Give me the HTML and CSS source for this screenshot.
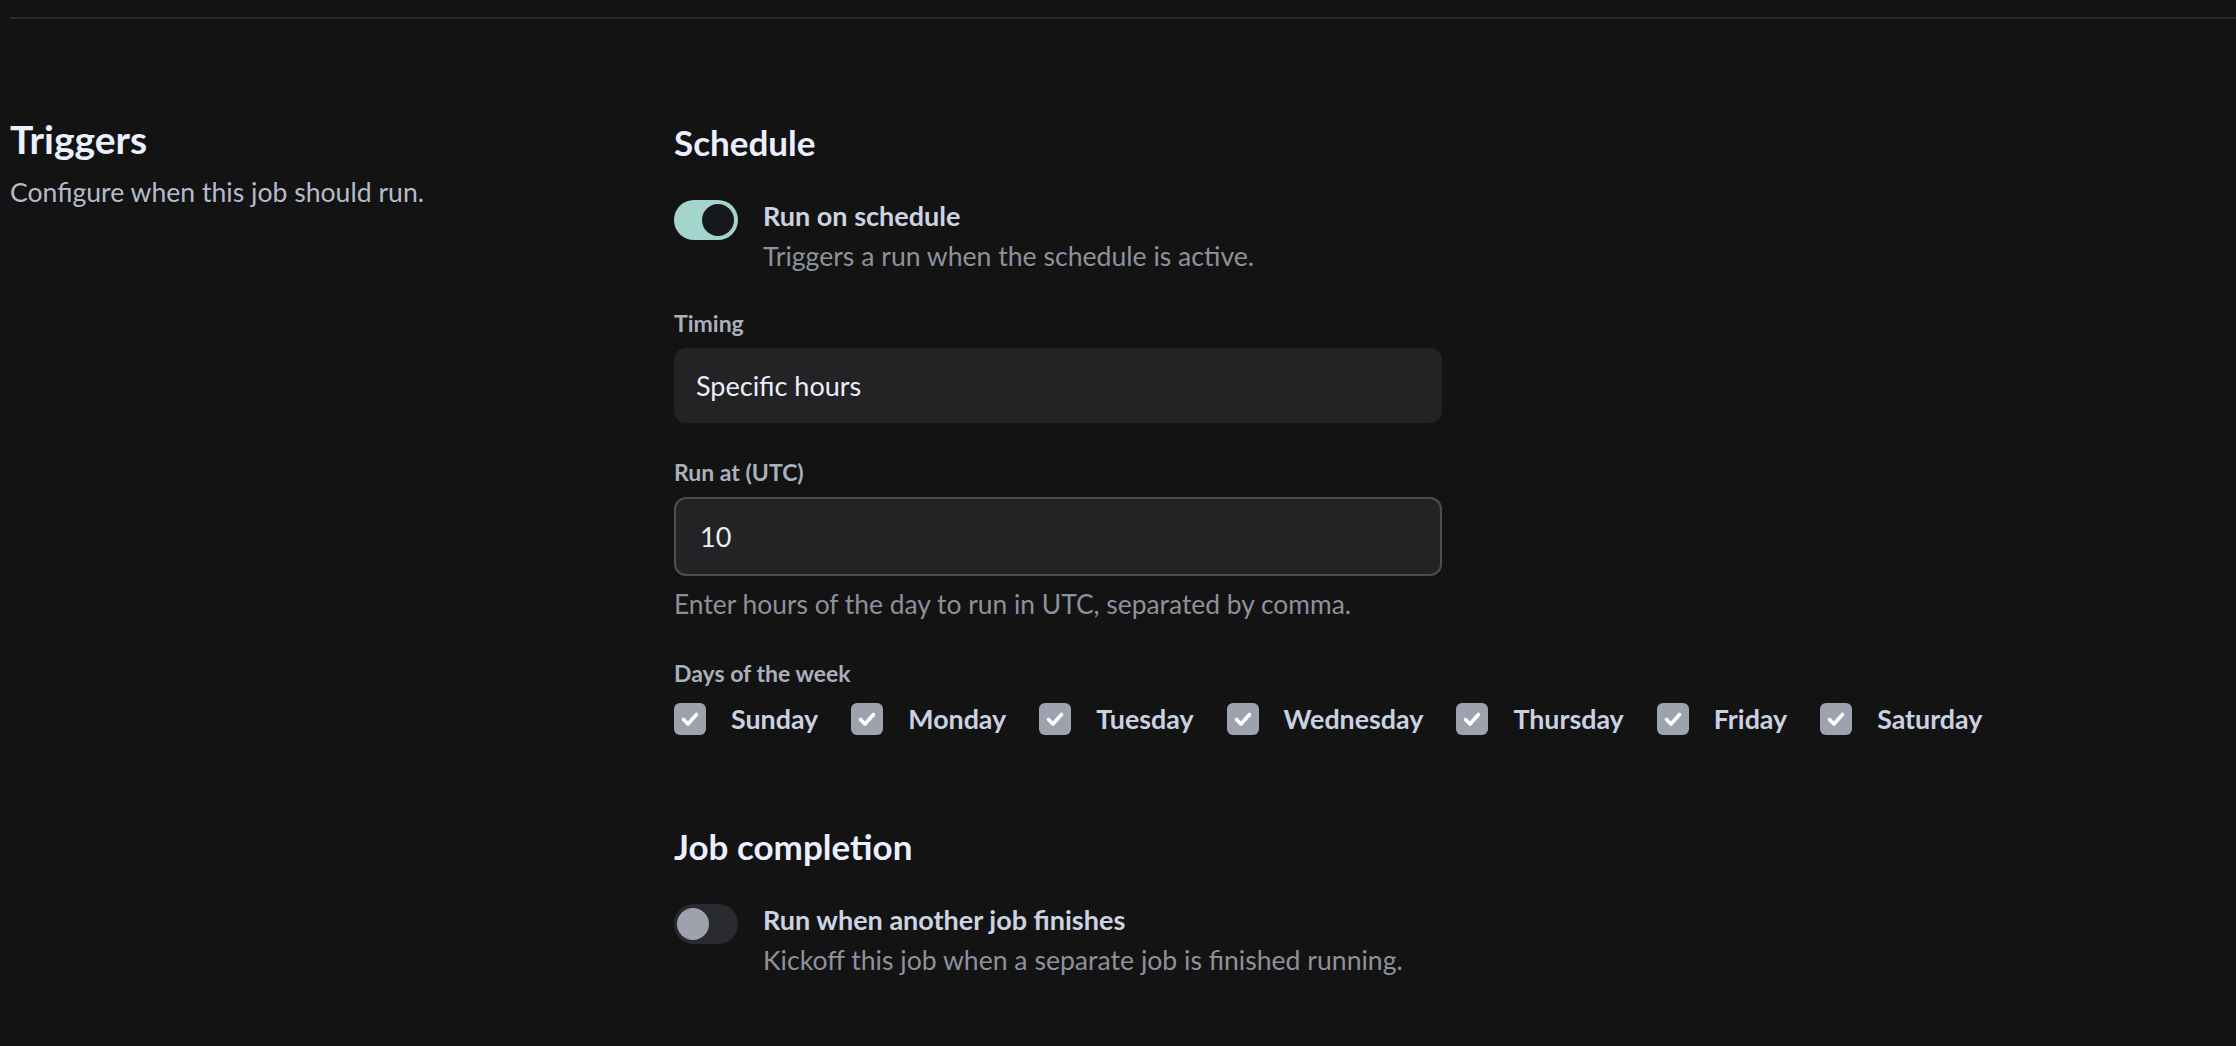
FILE: index.html
```html
<!DOCTYPE html>
<html lang="en">
<head>
<meta charset="utf-8">
<title>Triggers</title>
<link rel="stylesheet" href="styles.css">
</head>
<body>
<div class="divider"></div>
<section class="settings">
  <div class="intro">
    <h2 class="intro-title">Triggers</h2>
    <p class="intro-sub">Configure when this job should run.</p>
  </div>
  <div class="panel">
    <h3 class="group-title">Schedule</h3>
    <div class="switch-row">
      <span class="switch switch-on"><span class="knob"></span></span>
      <div class="switch-text">
        <div class="switch-label">Run on schedule</div>
        <div class="switch-desc">Triggers a run when the schedule is active.</div>
      </div>
    </div>

    <div class="field field-first">
      <div class="field-label">Timing</div>
      <div class="select">Specific hours</div>
    </div>

    <div class="field">
      <div class="field-label">Run at (UTC)</div>
      <div class="input">10</div>
      <div class="help">Enter hours of the day to run in UTC, separated by comma.</div>
    </div>

    <div class="field">
      <div class="field-label">Days of the week</div>
      <div class="days">
        <label class="day"><span class="check"><svg viewBox="0 0 32 32" width="32" height="32"><path d="M9.5 16.5 L14 21 L22.5 11.5" fill="none" stroke="#fff" stroke-width="3.6" stroke-linecap="round" stroke-linejoin="round"/></svg></span><span class="day-name">Sunday</span></label>
        <label class="day"><span class="check"><svg viewBox="0 0 32 32" width="32" height="32"><path d="M9.5 16.5 L14 21 L22.5 11.5" fill="none" stroke="#fff" stroke-width="3.6" stroke-linecap="round" stroke-linejoin="round"/></svg></span><span class="day-name">Monday</span></label>
        <label class="day"><span class="check"><svg viewBox="0 0 32 32" width="32" height="32"><path d="M9.5 16.5 L14 21 L22.5 11.5" fill="none" stroke="#fff" stroke-width="3.6" stroke-linecap="round" stroke-linejoin="round"/></svg></span><span class="day-name">Tuesday</span></label>
        <label class="day"><span class="check"><svg viewBox="0 0 32 32" width="32" height="32"><path d="M9.5 16.5 L14 21 L22.5 11.5" fill="none" stroke="#fff" stroke-width="3.6" stroke-linecap="round" stroke-linejoin="round"/></svg></span><span class="day-name">Wednesday</span></label>
        <label class="day"><span class="check"><svg viewBox="0 0 32 32" width="32" height="32"><path d="M9.5 16.5 L14 21 L22.5 11.5" fill="none" stroke="#fff" stroke-width="3.6" stroke-linecap="round" stroke-linejoin="round"/></svg></span><span class="day-name">Thursday</span></label>
        <label class="day"><span class="check"><svg viewBox="0 0 32 32" width="32" height="32"><path d="M9.5 16.5 L14 21 L22.5 11.5" fill="none" stroke="#fff" stroke-width="3.6" stroke-linecap="round" stroke-linejoin="round"/></svg></span><span class="day-name">Friday</span></label>
        <label class="day"><span class="check"><svg viewBox="0 0 32 32" width="32" height="32"><path d="M9.5 16.5 L14 21 L22.5 11.5" fill="none" stroke="#fff" stroke-width="3.6" stroke-linecap="round" stroke-linejoin="round"/></svg></span><span class="day-name">Saturday</span></label>
      </div>
    </div>

    <h3 class="group-title group-second">Job completion</h3>
    <div class="switch-row">
      <span class="switch switch-off"><span class="knob"></span></span>
      <div class="switch-text">
        <div class="switch-label">Run when another job finishes</div>
        <div class="switch-desc">Kickoff this job when a separate job is finished running.</div>
      </div>
    </div>
  </div>
</section>
</body>
</html>
```

FILE: styles.css
```css
* { box-sizing: border-box; }

html, body {
  margin: 0;
  padding: 0;
  background: #131313;
}

body {
  font-family: Lato, "Open Sans", sans-serif;
  color: #e8edfb;
  height: 1046px;
  overflow: hidden;
}

.divider {
  height: 2px;
  margin: 17px 0 0 10px;
  background: #29292c;
}

.settings {
  display: grid;
  grid-template-columns: 664px 1fr;
  padding: 96px 0 0 10px;
}

.intro-title {
  margin: 0;
  font-size: 39px;
  line-height: 48px;
  font-weight: 700;
  color: #eaf0fe;
}

.intro-sub {
  margin: 9px 0 0;
  font-size: 26.6px;
  line-height: 40px;
  color: #b3bbca;
}

.panel {
  padding-top: 7px;
}

.group-title {
  margin: 0;
  font-size: 35px;
  line-height: 40px;
  font-weight: 700;
  color: #eaf0fe;
}

.group-second {
  margin-top: 87px;
}

.switch-row {
  display: flex;
  align-items: flex-start;
  gap: 25px;
  margin-top: 34px;
}

.switch {
  position: relative;
  flex: none;
  width: 64px;
  height: 40px;
  margin-top: 4px;
  border-radius: 20px;
}

.switch-on { background: #a4d5cd; }
.switch-off { background: #2a2b30; }

.knob {
  position: absolute;
  top: 4px;
  width: 32px;
  height: 32px;
  border-radius: 50%;
}

.switch-on .knob { right: 4px; background: #17181b; }
.switch-off .knob { left: 3px; background: #9da2ad; }

.switch-label {
  font-size: 27px;
  line-height: 40px;
  font-weight: 700;
  color: #cdd3e3;
}

.switch-desc {
  font-size: 26.6px;
  line-height: 40px;
  color: #8d919b;
}

.field { margin-top: 33px; }
.field-first { margin-top: 31px; }

.field-label {
  font-size: 23px;
  line-height: 32px;
  font-weight: 700;
  color: #aab0bc;
  margin-bottom: 9px;
}

.select,
.input {
  width: 768px;
  background: #232326;
  color: #e9eef8;
  font-size: 27px;
  border-radius: 12px;
}

.select {
  height: 75px;
  line-height: 75px;
  padding: 0 22px;
}

.input {
  height: 79px;
  line-height: 75px;
  padding: 0 24px;
  border: 2px solid #4d4e52;
}

.help {
  margin-top: 8px;
  font-size: 26.4px;
  line-height: 40px;
  color: #8d919b;
}

.days {
  display: flex;
  align-items: center;
  gap: 33px;
  margin-top: 10px;
}

.day {
  display: flex;
  align-items: center;
  gap: 25px;
  height: 40px;
}

.check {
  width: 32px;
  height: 32px;
  border-radius: 6px;
  background: #9ca2ae;
  display: block;
}

.check svg { display: block; }

.day-name {
  font-size: 26.8px;
  line-height: 40px;
  font-weight: 700;
  color: #cad1e1;
}
```
